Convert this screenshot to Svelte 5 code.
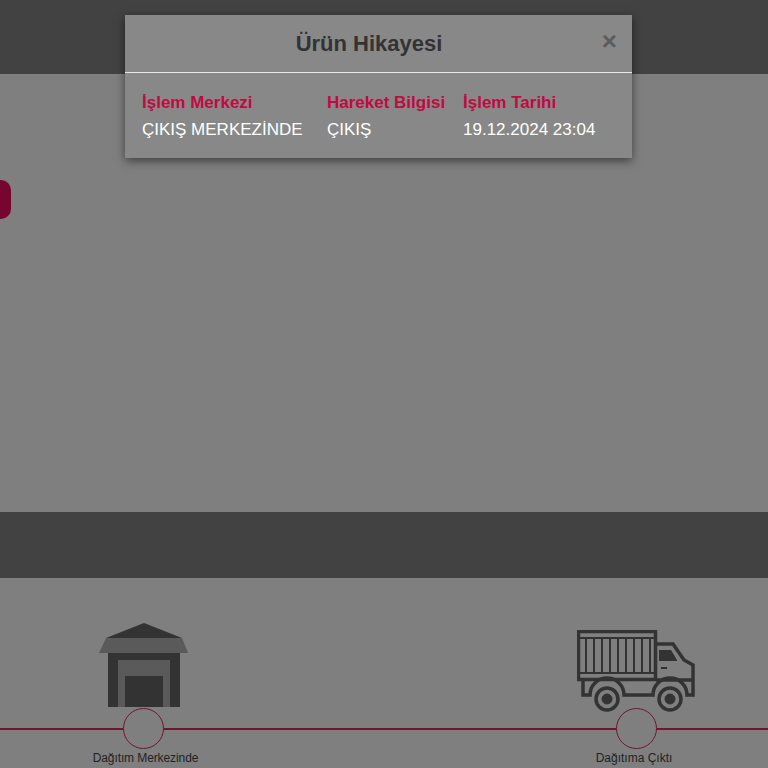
<script lang="ts">
	const columns = [
		{ title: 'İşlem Merkezi', value: 'ÇIKIŞ MERKEZİNDE' },
		{ title: 'Hareket Bilgisi', value: 'ÇIKIŞ' },
		{ title: 'İşlem Tarihi', value: '19.12.2024 23:04' },
	];
</script>

<div class="page">
	<header class="topbar"></header>

	<main class="content"></main>

	<div class="band"></div>

	<section class="timeline">
		<div class="step first">
			<svg class="icon" width="90" height="85" viewBox="0 0 90 85">
				<path d="M45 0 L83 15 L7 15 Z" fill="#333" />
				<path d="M7 15 L83 15 L89 30 L0 30 Z" fill="#5a5a5a" />
				<rect x="9" y="30" width="72" height="54" fill="#333" />
				<rect x="19" y="37" width="52" height="47" fill="#5a5a5a" />
				<rect x="26" y="53" width="38" height="31" fill="#333" />
			</svg>
			<span class="dot"></span>
			<span class="label">Dağıtım Merkezinde</span>
		</div>

		<div class="step second">
			<svg class="icon" width="118" height="84" viewBox="0 0 118 84">
				<g fill="none" stroke="#333" stroke-width="3.5">
					<rect x="1.5" y="1.5" width="77" height="48" />
					<path d="M2 8 H78 M2 43 H78" stroke-width="2" />
					<path
						d="M9 8 V43 M17 8 V43 M25 8 V43 M33 8 V43 M41 8 V43 M49 8 V43 M57 8 V43 M65 8 V43 M73 8 V43"
						stroke-width="2"
					/>
					<path d="M79 14 H96 L107 30 L116 35 V65 H110 A17 17 0 0 0 76 65 H47 A17 17 0 0 0 13 65 H6 V50" />
					<path d="M79 50 H116" />
				</g>
				<path d="M82 20 H94 L100 30 V31 H82 Z" fill="#333" />
				<rect x="84" y="37" width="6" height="2" fill="#333" />
				<g fill="#333" stroke="#333">
					<circle cx="30" cy="69" r="11" fill="none" stroke-width="3.5" />
					<circle cx="30" cy="69" r="5" />
					<circle cx="93" cy="69" r="11" fill="none" stroke-width="3.5" />
					<circle cx="93" cy="69" r="5" />
				</g>
			</svg>
			<span class="dot"></span>
			<span class="label">Dağıtıma Çıktı</span>
		</div>
	</section>

	<button class="side-tab" aria-label="Menü"></button>

	<div class="modal">
		<div class="modal-header">
			<h4>Ürün Hikayesi</h4>
			<span class="close">×</span>
		</div>
		<div class="modal-body">
			{#each columns as col}
				<div class="col">
					<strong>{col.title}</strong>
					<span>{col.value}</span>
				</div>
			{/each}
		</div>
	</div>
</div>

<style>
	:global(body) {
		margin: 0;
		font-family: 'Liberation Sans', Arial, sans-serif;
	}

	.page {
		position: relative;
		width: 768px;
		height: 768px;
		overflow: hidden;
		background: #7f7f7f;
	}

	.topbar {
		height: 74px;
		background: #424242;
	}

	.content {
		height: 438px;
	}

	.band {
		height: 66px;
		background: #424242;
	}

	.timeline {
		position: relative;
		height: 190px;
		display: grid;
		grid-template-columns: 288px 1fr;
	}

	/* line behind the circles */
	.timeline::before {
		content: '';
		position: absolute;
		left: 0;
		right: 0;
		top: 150px;
		height: 2px;
		background: #72152f;
	}

	.step {
		position: relative;
		display: flex;
		flex-direction: column;
		align-items: center;
	}

	.first {
		padding-top: 45px;
	}

	.second {
		padding-top: 52px;
		margin-left: 209px;
		width: 280px;
	}

	.second .icon {
		margin-left: -2px;
	}

	.icon {
		display: block;
		flex-shrink: 0;
	}

	.dot {
		position: absolute;
		top: 130px;
		left: 50%;
		margin-left: -21px;
		box-sizing: border-box;
		width: 41px;
		height: 41px;
		border: 1px solid #72152f;
		border-radius: 50%;
		background: #7f7f7f;
	}

	.label {
		position: absolute;
		top: 173px;
		left: 0;
		right: 0;
		text-align: center;
		font-size: 12px;
		line-height: 14px;
		color: #222;
	}

	.first .label {
		left: 3px;
		letter-spacing: -0.1px;
	}

	.second .label {
		left: -6px;
	}

	.side-tab {
		position: absolute;
		left: -20px;
		top: 180px;
		width: 31px;
		height: 39px;
		padding: 0;
		border: 0;
		border-radius: 10px;
		background: #76062f;
	}

	.modal {
		position: absolute;
		left: 125px;
		top: 15px;
		width: 507px;
		height: 143px;
		background: #888;
		box-shadow: 0 3px 9px rgba(0, 0, 0, 0.5);
	}

	.modal-header {
		position: relative;
		height: 58px;
		box-sizing: border-box;
		border-bottom: 1px solid #e6e6e6;
		display: flex;
		align-items: center;
		justify-content: center;
		padding-right: 19px;
	}

	h4 {
		margin: 0;
		font-size: 22px;
		font-weight: 700;
		color: #333;
	}

	.close {
		position: absolute;
		right: 15px;
		top: 11px;
		font-size: 26px;
		line-height: 30px;
		font-weight: 700;
		color: #5c5c5c;
	}

	.modal-body {
		display: flex;
		padding: 19px 17px 0;
	}

	.col {
		display: flex;
		flex-direction: column;
		gap: 6px;
		font-size: 17px;
		line-height: 21px;
		color: #fff;
	}

	.col:nth-child(1) {
		width: 185px;
	}

	.col:nth-child(2) {
		width: 136px;
	}

	.col strong {
		color: #c00a42;
	}
</style>
